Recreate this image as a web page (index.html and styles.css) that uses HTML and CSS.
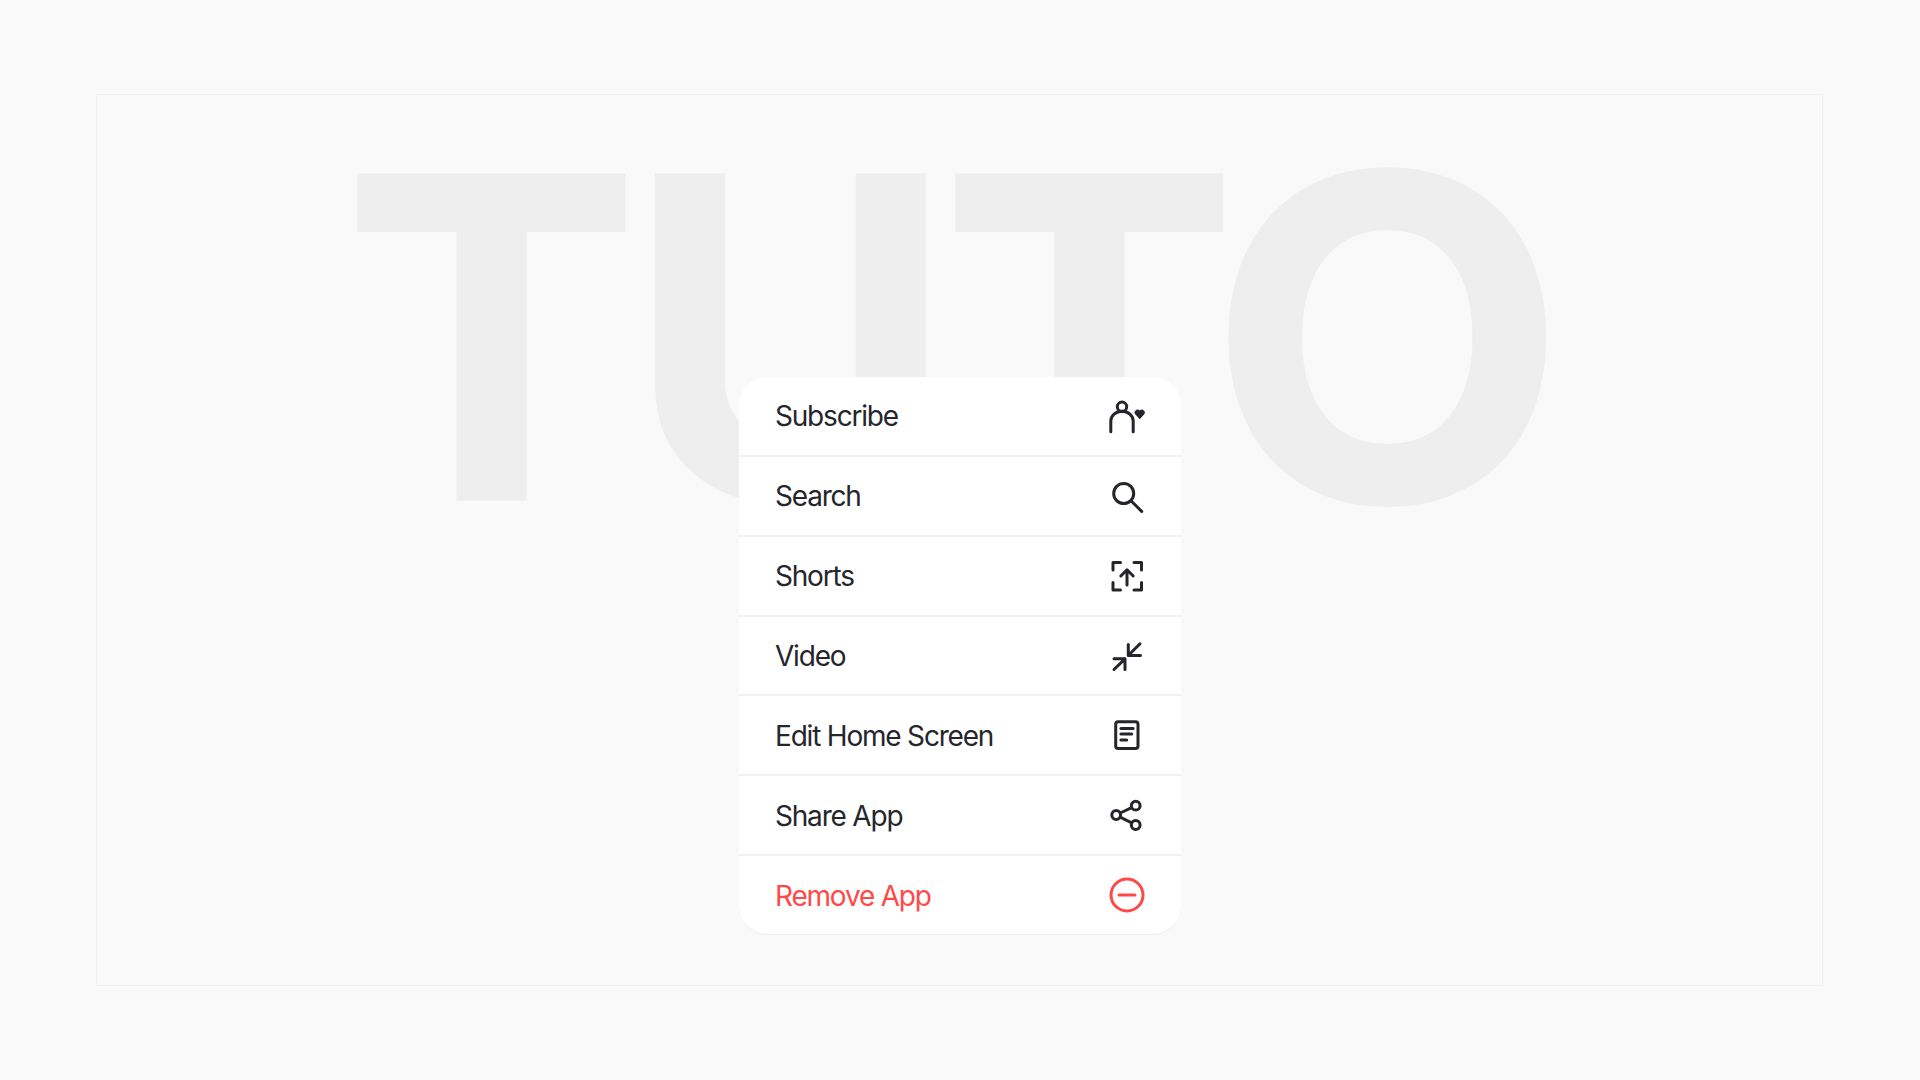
FILE: index.html
```html
<!DOCTYPE html>
<html lang="en">
<head>
<meta charset="utf-8">
<title>Context menu</title>
<link rel="stylesheet" href="styles.css">
</head>
<body>
<main class="frame">
  <div class="backdrop">TUT<span class="wide">O</span></div>
  <ul class="menu">
    <li class="item"><span class="label">Subscribe</span>
      <svg class="icon" viewBox="0 0 36 36"><circle cx="13" cy="8.800" r="4.700"/><path d="M1.800 33.800V23.300a11.200 10 0 0 1 22.400 0V33.800"/><path class="fill" d="M30.700 21.300l-4.300-4.800a2.900 2.900 0 0 1 4.300-3.900 2.900 2.900 0 0 1 4.300 3.900z"/></svg></li>
    <li class="item"><span class="label">Search</span>
      <svg class="icon" viewBox="0 0 36 36"><circle cx="14.700" cy="15.500" r="10"/><path d="M22 22.700 32.700 33.400"/></svg></li>
    <li class="item"><span class="label">Shorts</span>
      <svg class="icon" viewBox="0 0 36 36"><path d="M11.500 4.500H4V12M25 4.500H32.500V12M4 24.500V32H11.500M32.500 24.500V32H25"/><path d="M18 27V12M11.800 18 18 11.800 24.200 18"/></svg></li>
    <li class="item"><span class="label">Video</span>
      <svg class="icon" viewBox="0 0 36 36"><path d="M31 5.800 19.300 17.500M19.300 6.500V17.500H31.500M16 20.800 5 31.500M5 20.800H16V31.500"/></svg></li>
    <li class="item"><span class="label">Edit Home Screen</span>
      <svg class="icon" viewBox="0 0 36 36"><rect x="6.700" y="4.800" width="22.300" height="26.800" rx="2.500"/><path d="M11.900 11.400H24.100M11.900 17.100H22.700M11.900 23.100H17.700"/></svg></li>
    <li class="item"><span class="label">Share App</span>
      <svg class="icon" viewBox="0 0 36 36"><circle cx="26.700" cy="8.700" r="4.400"/><circle cx="7.200" cy="18" r="4.400"/><circle cx="26.700" cy="28" r="4.400"/><path d="M11.200 16 22.700 10.700M11.200 20.200 22.700 25.800"/></svg></li>
    <li class="item danger"><span class="label">Remove App</span>
      <svg class="icon" viewBox="0 0 36 36"><circle cx="18" cy="18" r="16"/><path d="M10 18H26"/></svg></li>
  </ul>
</main>
</body>
</html>
```
FILE: styles.css
```css
* { box-sizing: border-box; }
html, body { height: 100%; }
body {
  margin: 0;
  background: #f9f9f9;
  padding: 94px 97px 94px 96px;
  font-family: Inter, "Liberation Sans", sans-serif;
  overflow: hidden;
}
.frame {
  position: relative;
  height: 892px;
  border: 1px solid #f0f0f2;
  overflow: hidden;
}
.backdrop {
  position: absolute;
  left: 246px;
  top: 20px;
  font-size: 445px;
  font-weight: 700;
  letter-spacing: -12.500px;
  -webkit-text-stroke: 3.500px #eeeeee;
  line-height: 1;
  color: #eeeeee;
  white-space: nowrap;
}
.wide {
  display: inline-block;
  margin-left: -16px;
  transform: scale(1.04, 1.012);
  transform-origin: left center;
}
.menu {
  position: absolute;
  left: 642px;
  top: 282px;
  width: 442px;
  height: 558px;
  margin: 0;
  padding: 0;
  list-style: none;
  background: #fff;
  border-radius: 28px;
  border-bottom: 1px solid #ececf2;
  display: flex;
  flex-direction: column;
}
.item {
  flex: 1;
  display: flex;
  align-items: center;
  justify-content: space-between;
  padding: 0 36px;
  font-size: 28px;
  letter-spacing: -1.200px;
  color: #24262b;
  border-bottom: 2px solid #f0f0f6;
}
.item:last-child { border-bottom: 0; }
.label { padding-top: 1px; }
.danger { color: #ff4848; }
.icon {
  width: 36px;
  height: 36px;
  fill: none;
  stroke: currentColor;
  stroke-width: 3;
  stroke-linecap: round;
  stroke-linejoin: round;
}
.icon .fill { fill: currentColor; stroke: none; }
```
